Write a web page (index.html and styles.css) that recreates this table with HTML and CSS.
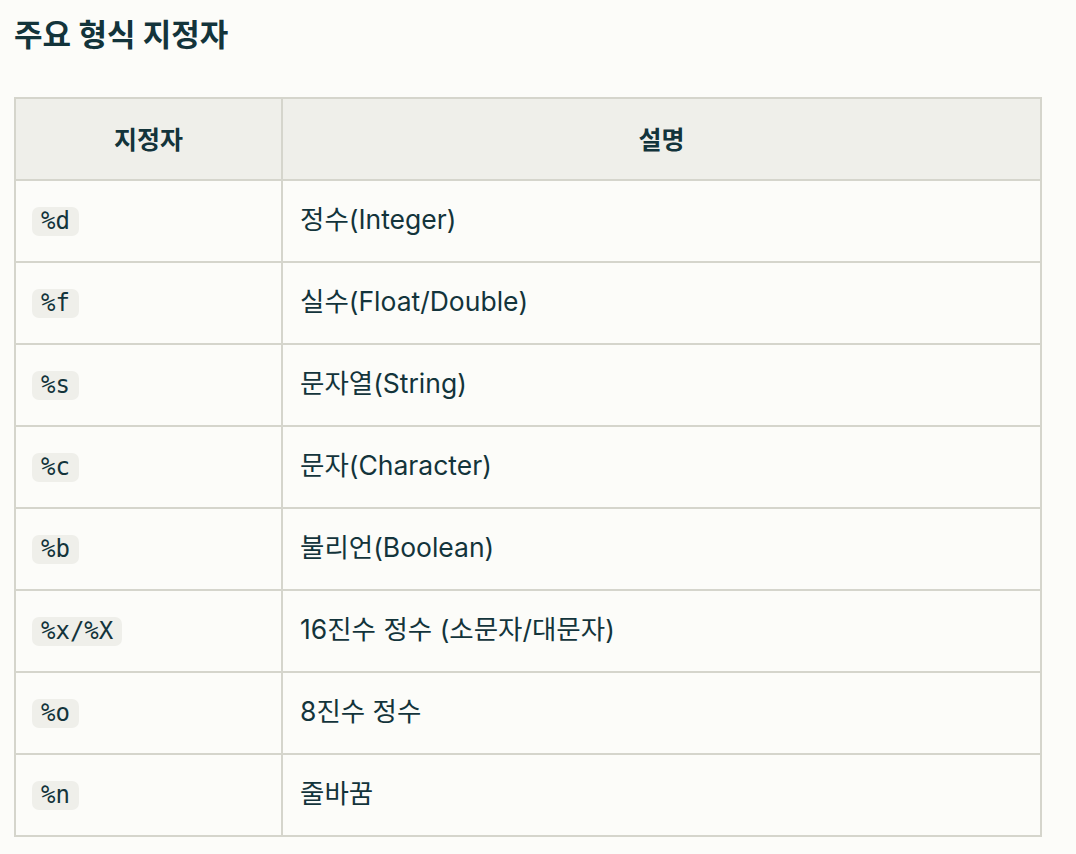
FILE: index.html
```html
<!DOCTYPE html>
<html lang="ko">
<head>
<meta charset="utf-8">
<link rel="stylesheet" href="styles.css">
</head>
<body>
<main class="doc">
  <h2 class="title">주요 형식 지정자</h2>
  <table class="spec">
    <thead>
      <tr><th class="c1">지정자</th><th>설명</th></tr>
    </thead>
    <tbody>
      <tr><td><code>%d</code></td><td>정수(Integer)</td></tr>
      <tr><td><code>%f</code></td><td>실수(Float/Double)</td></tr>
      <tr><td><code>%s</code></td><td>문자열(String)</td></tr>
      <tr><td><code>%c</code></td><td>문자(Character)</td></tr>
      <tr><td><code>%b</code></td><td>불리언(Boolean)</td></tr>
      <tr><td><code>%x/%X</code></td><td>16진수 정수 (소문자/대문자)</td></tr>
      <tr><td><code>%o</code></td><td>8진수 정수</td></tr>
      <tr><td><code>%n</code></td><td>줄바꿈</td></tr>
    </tbody>
  </table>
</main>
</body>
</html>
```

FILE: styles.css
```css
html, body {
  margin: 0;
  padding: 0;
  background: #fcfcf9;
}
body {
  color: #13343b;
  font-family: "Inter", "Noto Sans CJK KR", sans-serif;
}
.doc {
  padding: 16px 0 0 14px;
}
.title {
  margin: 0;
  font-size: 31px;
  line-height: 38px;
  font-weight: 700;
}
.spec {
  margin-top: 43px;
  width: 1028px;
  border-collapse: collapse;
  font-size: 26px;
}
.spec th, .spec td {
  border: 2px solid #d5d5cc;
  text-align: left;
}
.spec th {
  background: #efefea;
  height: 77px;
  text-align: center;
  font-weight: 700;
  font-size: 25px;
  padding: 0 0 3px;
}
.spec th.c1 {
  width: 265px;
}
.spec td {
  height: 82px;
  padding: 0 16px 3px;
  box-sizing: border-box;
}
.spec td + td {
  padding-left: 17px;
  padding-bottom: 7px;
  font-size: 26.5px;
}
code {
  font-family: "DejaVu Sans Mono", monospace;
  font-size: 24px;
  line-height: 29px;
  display: inline-block;
  background: #efefea;
  border-radius: 7px;
  padding: 0 9px;
}
```
